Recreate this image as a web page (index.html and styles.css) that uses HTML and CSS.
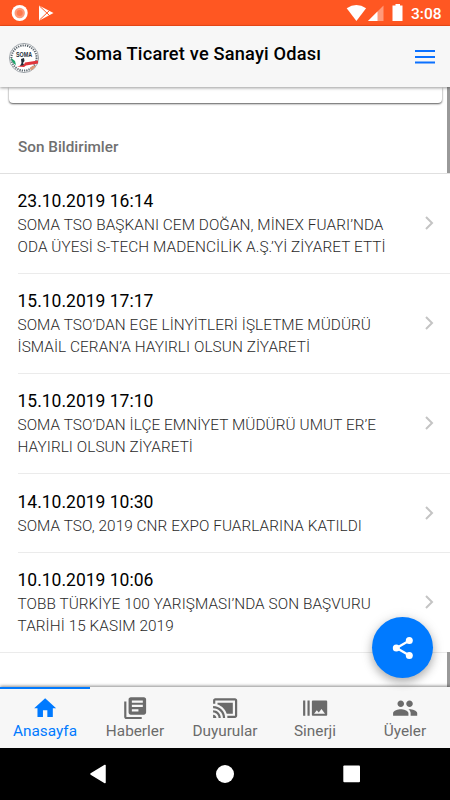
FILE: index.html
```html
<!DOCTYPE html>
<html lang="tr">
<head>
<meta charset="utf-8">
<title>Soma Ticaret ve Sanayi Odası</title>
<link rel="stylesheet" href="styles.css">
</head>
<body>
<div class="status">
  <svg class="status-left" width="60" height="26" viewBox="0 0 60 26">
    <circle cx="19.700" cy="13" r="8" fill="#fff"/><circle cx="19.700" cy="13" r="5.200" fill="#ff9a78"/><circle cx="19.700" cy="13" r="3" fill="#ff7a4e"/>
    <path d="M39 5.500L53.500 13 39 20.700z" fill="#fff"/><path d="M39.500 6L50 16M39.500 20L50 10" stroke="#ff5722" stroke-width="1"/>
  </svg>
  <svg class="status-icons" width="62" height="26" viewBox="0 0 62 26">
    <path d="M.7 8.200Q10.400 1.800 20.100 8.200L10.400 21z" fill="#fff"/>
    <path d="M37.500 5.500V21H22z" fill="#ff9a7a"/><path d="M31.500 11.500V21H22z" fill="#fff"/>
    <path d="M46.500 5.500h3V4h4.500v1.500h2.500V21h-10z" fill="#fff"/>
  </svg>
  <span class="clock">3:08</span>
</div>
<header class="toolbar">
  <svg class="logo" width="32" height="32" viewBox="0 0 32 32">
    <circle cx="16" cy="16" r="14.600" fill="#fff" stroke="#8a9298" stroke-width=".8"/>
    <circle cx="16" cy="16" r="12.600" fill="none" stroke="#5d676f" stroke-width="2" stroke-dasharray="1.300 1"/>
    <circle cx="16" cy="16" r="10.600" fill="#fff"/>
    <path d="M3 17q2 5 5 6l-1-4-4-3z" fill="#20a36c"/>
    <path d="M9 24.500l7-2 1-2 13-2v3l-12 2-2 1.500z" fill="#e0353c"/>
    <path d="M22 26.500q1-3 6-3-1 3-5 5z" fill="#dc9b78"/>
    <path d="M13 17l3-1 .5 3-1.500 2 1 2-4 1 1.500-3z" fill="#222b38"/>
    <text class="logo-text" x="16" y="14.500" text-anchor="middle" textLength="16" lengthAdjust="spacingAndGlyphs">SOMA</text>
  </svg>
  <h1>Soma Ticaret ve Sanayi Odası</h1>
  <svg class="menu" width="20" height="14" viewBox="0 0 20 14"><path d="M0 1h20M0 7h20M0 12.500h20" stroke="#0b71ff" stroke-width="2"/></svg>
</header>
<main>
  <div class="card-end"></div>
  <h2>Son Bildirimler</h2>
  <ul class="list">
    <li><div class="item"><div><h3>23.10.2019 16:14</h3><p>SOMA TSO BAŞKANI CEM DOĞAN, MİNEX FUARI’NDA<br>ODA ÜYESİ S-TECH MADENCİLİK A.Ş.’Yİ ZİYARET ETTİ</p></div><svg class="chev" viewBox="0 0 9 14"><path d="M1 1l6 6-6 6"/></svg></div></li>
    <li><div class="item"><div><h3>15.10.2019 17:17</h3><p>SOMA TSO’DAN EGE LİNYİTLERİ İŞLETME MÜDÜRÜ<br>İSMAİL CERAN’A HAYIRLI OLSUN ZİYARETİ</p></div><svg class="chev" viewBox="0 0 9 14"><path d="M1 1l6 6-6 6"/></svg></div></li>
    <li><div class="item"><div><h3>15.10.2019 17:10</h3><p>SOMA TSO’DAN İLÇE EMNİYET MÜDÜRÜ UMUT ER’E<br>HAYIRLI OLSUN ZİYARETİ</p></div><svg class="chev" viewBox="0 0 9 14"><path d="M1 1l6 6-6 6"/></svg></div></li>
    <li><div class="item"><div><h3>14.10.2019 10:30</h3><p>SOMA TSO, 2019 CNR EXPO FUARLARINA KATILDI</p></div><svg class="chev" viewBox="0 0 9 14"><path d="M1 1l6 6-6 6"/></svg></div></li>
    <li><div class="item"><div><h3>10.10.2019 10:06</h3><p>TOBB TÜRKİYE 100 YARIŞMASI’NDA SON BAŞVURU<br>TARİHİ 15 KASIM 2019</p></div><svg class="chev" viewBox="0 0 9 14"><path d="M1 1l6 6-6 6"/></svg></div></li>
  </ul>
  <i class="scroll scroll-top"></i><i class="scroll scroll-bottom"></i>
</main>
<button class="fab" aria-label="Paylaş"><svg width="22" height="24" viewBox="0 0 22 24"><path d="M17.500 4.500L4.500 12l13 7.500" fill="none" stroke="#fff" stroke-width="2.300"/><g fill="#fff"><circle cx="17.300" cy="4.500" r="3.500"/><circle cx="4.300" cy="12" r="3.500"/><circle cx="17.300" cy="19.500" r="3.500"/></g></svg></button>
<nav class="tabs">
  <a class="tab active"><svg viewBox="0 0 24 24"><path d="M10 20v-6h4v6h5v-8h3L12 3 2 12h3v8z"/></svg>Anasayfa</a>
  <a class="tab"><svg viewBox="0 0 24 24"><path d="M4 6H2v14c0 1.100.9 2 2 2h14v-2H4V6zm16-4H8c-1.100 0-2 .9-2 2v12c0 1.100.9 2 2 2h12c1.100 0 2-.9 2-2V4c0-1.100-.9-2-2-2zm-1 9H9V9h10v2zm-4 4H9v-2h6v2zm4-8H9V5h10v2z"/></svg>Haberler</a>
  <a class="tab"><svg viewBox="0 0 24 24"><path d="M1 18v3h3c0-1.660-1.340-3-3-3zm0-4v2c2.760 0 5 2.240 5 5h2c0-3.870-3.130-7-7-7zm18-7H5v1.630c3.960 1.280 7.090 4.410 8.370 8.370H19V7zM1 10v2c4.970 0 9 4.030 9 9h2c0-6.080-4.930-11-11-11zm20-7H3c-1.100 0-2 .9-2 2v3h2V5h18v14h-7v2h7c1.100 0 2-.9 2-2V5c0-1.100-.9-2-2-2z"/></svg>Duyurular</a>
  <a class="tab"><svg viewBox="0 0 24 24"><path d="M1 5h2v14H1zm4 0h2v14H5zm17 0H10c-.55 0-1 .45-1 1v12c0 .55.450 1 1 1h12c.55 0 1-.45 1-1V6c0-.55-.45-1-1-1zM11 17l2.500-3.150L15.290 16l2.500-3.220L21 17H11z"/></svg>Sinerji</a>
  <a class="tab"><svg viewBox="0 0 24 24"><path d="M16 11c1.660 0 2.990-1.340 2.990-3S17.660 5 16 5c-1.660 0-3 1.340-3 3s1.340 3 3 3zm-8 0c1.660 0 2.990-1.340 2.990-3S9.660 5 8 5C6.340 5 5 6.340 5 8s1.340 3 3 3zm0 2c-2.330 0-7 1.170-7 3.500V19h14v-2.500c0-2.330-4.670-3.500-7-3.500zm8 0c-.29 0-.62.020-.97.050 1.160.84 1.970 1.970 1.970 3.450V19h6v-2.500c0-2.330-4.670-3.500-7-3.500z"/></svg>Üyeler</a>
</nav>
<footer class="system">
  <svg viewBox="0 0 450 52"><path d="M91 26L105 17.500V34.500z" fill="#fff" stroke="#fff" stroke-width="1.500" stroke-linejoin="round"/><circle cx="225" cy="26" r="9" fill="#fff"/><rect x="343.300" y="17.500" width="16.700" height="16.700" rx="1" fill="#fff"/></svg>
</footer>
</body>
</html>
```
FILE: styles.css
```css
* { box-sizing: border-box; }
body {
  margin: 0;
  width: 450px;
  height: 800px;
  overflow: hidden;
  display: flex;
  flex-direction: column;
  position: relative;
  background: #fff;
  font-family: Roboto, sans-serif;
}
h1, h2, h3, p, ul { margin: 0; padding: 0; font-weight: 400; }
.status {
  height: 26px;
  flex: none;
  display: flex;
  align-items: center;
  background: #ff5722;
  border-bottom: 1px solid #f54c18;
}
.status svg { flex: none; }
.status-icons { margin-left: 286px; }
.clock { margin-left: 3px; padding-top: 2px; color: #fff; font-size: 15.5px; font-weight: 500; }
.toolbar {
  height: 61px;
  flex: none;
  display: flex;
  align-items: center;
  padding: 0 15px 0 8px;
  background: #f7f7f7;
  position: relative;
  z-index: 2;
  box-shadow: 0 1px 3px rgba(0, 0, 0, .4);
}
.logo { margin-top: 2px; }
.logo-text { font: 700 8px "Liberation Sans", sans-serif; fill: #26303c; }
.toolbar h1 { margin: -6px auto 0 34.5px; font-size: 18.2px; font-weight: 500; letter-spacing: .2px; white-space: nowrap; }
.menu { margin-top: 1px; }
main { flex: 1; min-height: 0; position: relative; overflow: hidden; }
.card-end {
  height: 16px;
  margin: 0 8px 0 9px;
  border-radius: 0 0 4px 4px;
  box-shadow: 0 1px 2px rgba(0, 0, 0, .65);
}
h2 {
  height: 70.5px;
  padding: 32.5px 18px 0;
  border-bottom: 1px solid #e0e0e0;
  font-size: 15.3px;
  line-height: 22px;
  font-weight: 500;
  color: #707070;
}
.list { list-style: none; }
.list li { padding-left: 17.500px; }
.item {
  display: flex;
  align-items: center;
  justify-content: space-between;
  padding: 17.25px 16px 15px 0;
  border-bottom: 1px solid #ebebeb;
}
.list li:last-child { padding-left: 0; }
.list li:last-child .item { padding-left: 17.500px; }
.item h3 { font-size: 17.5px; line-height: 21px; margin-bottom: 2px; color: #000; }
.item p { font-size: 15.33px; font-weight: 300; letter-spacing: .07px; line-height: 22px; color: #2a2a2a; white-space: nowrap; }
.chev { width: 9px; height: 14px; margin-top: -3px; fill: none; stroke: #c4c4c4; stroke-width: 2; }
.scroll { position: absolute; right: 0; width: 3px; background: #999; }
.scroll-top { top: 0; height: 86px; }
.scroll-bottom { top: 565px; bottom: 0; }
.fab {
  position: absolute;
  left: 372px;
  top: 617px;
  width: 61px;
  height: 61px;
  padding: 0;
  border: 0;
  border-radius: 50%;
  z-index: 4;
  display: grid;
  place-items: center;
  background: #007aff;
  box-shadow: 0 4px 8px rgba(0, 0, 0, .25), 0 2px 14px rgba(0, 0, 0, .12);
}
.tabs {
  height: 61px;
  flex: none;
  display: grid;
  grid-template-columns: repeat(5, 1fr);
  background: #f7f7f7;
  position: relative;
  z-index: 2;
  box-shadow: 0 -1px 3px rgba(0, 0, 0, .45);
}
.tab {
  display: flex;
  flex-direction: column;
  align-items: center;
  padding-top: 7px;
  border-top: 2px solid transparent;
  font-size: 15.33px;
  line-height: 22px;
  color: #6b6b6b;
}
.tab svg { width: 26.300px; height: 26.300px; margin-bottom: -.8px; margin-top: -1.500px; fill: currentColor; }
.tab.active { color: #007aff; border-color: #007aff; }
.system { height: 52px; flex: none; background: #000; position: relative; z-index: 3; }
.system svg { display: block; width: 450px; height: 52px; }
```
